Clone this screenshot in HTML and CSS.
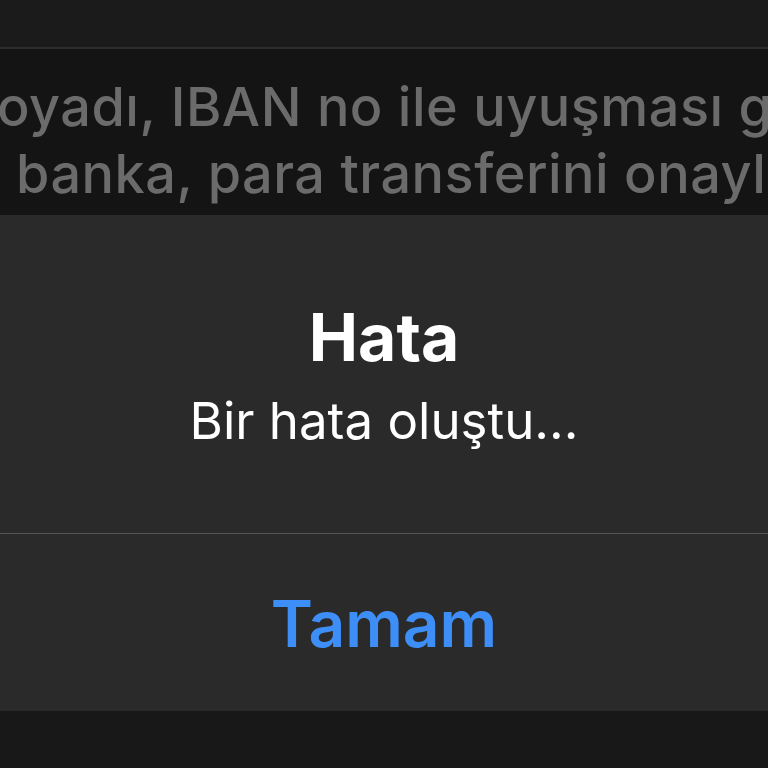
FILE: index.html
```html
<!DOCTYPE html>
<html lang="tr">
<head>
<meta charset="utf-8">
<title>Hata</title>
<link rel="stylesheet" href="styles.css">
</head>
<body>
<div class="screen">
  <div class="topbar"></div>
  <div class="bgtext">
    <p class="line first">oyadı, IBAN no ile uyuşması gerekmektedir</p>
    <p class="line second">banka, para transferini onaylamayacaktır</p>
  </div>
  <div class="alert">
    <div class="alert-body">
      <h1 class="title">Hata</h1>
      <p class="message">Bir hata oluştu...</p>
    </div>
    <div class="alert-actions">
      <button class="action">Tamam</button>
    </div>
  </div>
  <div class="bottombar"></div>
</div>
</body>
</html>
```

FILE: styles.css
```css
* { box-sizing: border-box; }
html, body { margin: 0; padding: 0; background: #181818; }
body { font-family: Inter, "Noto Sans", "Liberation Sans", sans-serif; }
.screen {
  width: 768px;
  height: 768px;
  overflow: hidden;
  display: flex;
  flex-direction: column;
}
.topbar {
  height: 49px;
  background: #1b1b1c;
  border-bottom: 2px solid #2d2d2e;
  flex: none;
}
.bgtext {
  height: 166px;
  background: #141414;
  flex: none;
  padding-top: 24px;
  overflow: hidden;
}
.line {
  margin: 0;
  white-space: nowrap;
  overflow: hidden;
  color: #6b6b6b;
  font-size: 54px;
  line-height: 67px;
  font-weight: 450;
  letter-spacing: 0.5px;
}
.line.first { text-indent: -3px; }
.line.second { text-indent: 16px; }
.alert {
  flex: none;
  height: 496px;
  background: #2a2a2a;
  display: flex;
  flex-direction: column;
}
.alert-body {
  height: 319px;
  border-bottom: 1px solid #555;
  text-align: center;
  padding-top: 82px;
}
.title {
  margin: 0;
  color: #fff;
  font-size: 66px;
  line-height: 80px;
  font-weight: 700;
}
.message {
  margin: 16px 0 0;
  color: #fff;
  font-size: 51px;
  line-height: 56px;
  font-weight: 400;
}
.alert-actions {
  flex: 1;
  display: flex;
  align-items: center;
  justify-content: center;
}
.action {
  background: none;
  border: 0;
  padding: 0;
  font-family: inherit;
  color: #3e8ef7;
  font-size: 64px;
  font-weight: 600;
  line-height: 80px;
  margin-top: 2px;
}
.bottombar {
  flex: 1;
  background: #181818;
}
```
